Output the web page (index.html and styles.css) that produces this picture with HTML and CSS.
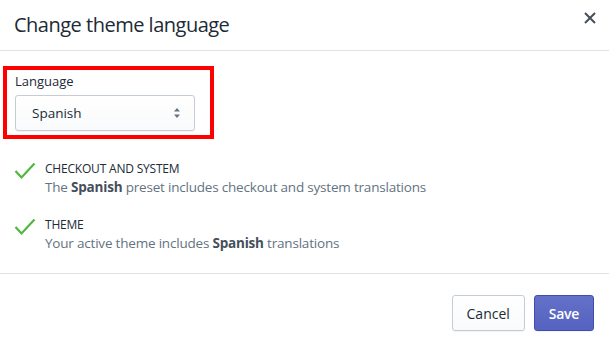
FILE: index.html
```html
<!DOCTYPE html>
<html lang="en">

<head>
    <meta charset="UTF-8">
    <meta name="viewport" content="width=device-width, initial-scale=1.0">
    <title>Change theme language</title>
    <link rel="stylesheet" href="styles.css">
</head>

<body>
    <div class="modal">
        <div class="modal-header">
            <h2>Change theme language</h2>
            <button class="close-button" aria-label="Close">
                <svg width="12" height="12" viewBox="0 0 12 12">
                    <path d="M1 1L11 11M11 1L1 11" stroke="#454f5b" stroke-width="2" fill="none" />
                </svg>
            </button>
        </div>

        <div class="modal-body">
            <div class="highlight">
                <label class="field-label" for="language">Language</label>
                <div class="select">
                    <span class="select-value">Spanish</span>
                    <svg class="select-arrows" width="8" height="12" viewBox="0 0 8 12">
                        <path d="M4 1L7 4.5H1Z M4 11L1 7.5H7Z" fill="#637381" />
                    </svg>
                </div>
            </div>

            <ul class="checks">
                <li class="check-item">
                    <svg class="check-icon" width="22" height="18" viewBox="0 0 22 18">
                        <path d="M1.5 9L7.5 15.5L20.5 1.5" stroke="#50b83c" stroke-width="2.2" fill="none" />
                    </svg>
                    <div>
                        <div class="check-title">CHECKOUT AND SYSTEM</div>
                        <p class="check-text">The <strong>Spanish</strong> preset includes checkout and system translations</p>
                    </div>
                </li>
                <li class="check-item">
                    <svg class="check-icon" width="22" height="18" viewBox="0 0 22 18">
                        <path d="M1.5 9L7.5 15.5L20.5 1.5" stroke="#50b83c" stroke-width="2.2" fill="none" />
                    </svg>
                    <div>
                        <div class="check-title">THEME</div>
                        <p class="check-text">Your active theme includes <strong>Spanish</strong> translations</p>
                    </div>
                </li>
            </ul>
        </div>

        <div class="modal-footer">
            <button class="btn">Cancel</button>
            <button class="btn btn-primary">Save</button>
        </div>
    </div>
</body>

</html>
```

FILE: styles.css
```css
* {
    margin: 0;
    padding: 0;
    box-sizing: border-box;
}

body {
    font-family: 'Open Sans', 'Noto Sans', sans-serif;
    background: #ffffff;
    color: #212b36;
}

.modal {
    width: 609px;
    background: #ffffff;
}

.modal-header {
    height: 51px;
    display: flex;
    align-items: center;
    justify-content: space-between;
    padding: 0 9px 2px 14px;
    border-bottom: 1px solid #dfe3e8;
}

.modal-header h2 {
    font-size: 20px;
    font-weight: 400;
    color: #212b36;
    letter-spacing: -0.5px;
}

.close-button {
    background: none;
    border: none;
    width: 20px;
    height: 20px;
    display: flex;
    align-items: center;
    justify-content: center;
    margin-bottom: 12px;
}

.modal-body {
    padding: 15px 16px 20px 3px;
    border-bottom: 1px solid #dfe3e8;
}

.highlight {
    width: 211px;
    border: 4px solid #ff0000;
    padding: 1px 15px 4px 8px;
}

.field-label {
    display: block;
    font-size: 13px;
    line-height: 20px;
    margin-bottom: 4px;
    color: #212b36;
}

.select {
    height: 36px;
    display: flex;
    align-items: center;
    justify-content: space-between;
    padding: 0 13px 0 16px;
    border: 1px solid #c4cdd5;
    border-radius: 3px;
    background: linear-gradient(180deg, #ffffff, #f9fafb);
    box-shadow: 0 1px 0 rgba(22, 29, 37, 0.05);
    font-size: 13.5px;
    color: #212b36;
}

.checks {
    list-style: none;
    padding: 22px 0 0 11px;
    display: flex;
    flex-direction: column;
    gap: 20px;
}

.check-item {
    display: flex;
    gap: 9px;
}

.check-icon {
    flex-shrink: 0;
    margin-top: 1px;
}

.check-title {
    font-size: 12px;
    line-height: 16px;
    color: #212b36;
    letter-spacing: -0.2px;
}

.check-text {
    font-size: 13.5px;
    line-height: 20px;
    color: #637381;
    letter-spacing: -0.2px;
}

.check-text strong {
    font-weight: 700;
    color: #454f5b;
}

.modal-footer {
    display: flex;
    justify-content: flex-end;
    gap: 9px;
    padding: 21px 15px 16px 14px;
}

.btn {
    height: 36px;
    padding: 0 14px;
    border: 1px solid #c4cdd5;
    border-radius: 3px;
    background: linear-gradient(180deg, #ffffff, #f9fafb);
    box-shadow: 0 1px 0 rgba(22, 29, 37, 0.05);
    font-family: inherit;
    font-size: 14px;
    color: #212b36;
}

.btn-primary {
    padding: 0 14px;
    border-color: #3f4eae;
    background: linear-gradient(180deg, #6371c7, #5563c1);
    color: #ffffff;
    font-weight: 600;
    letter-spacing: -0.3px;
}
```
